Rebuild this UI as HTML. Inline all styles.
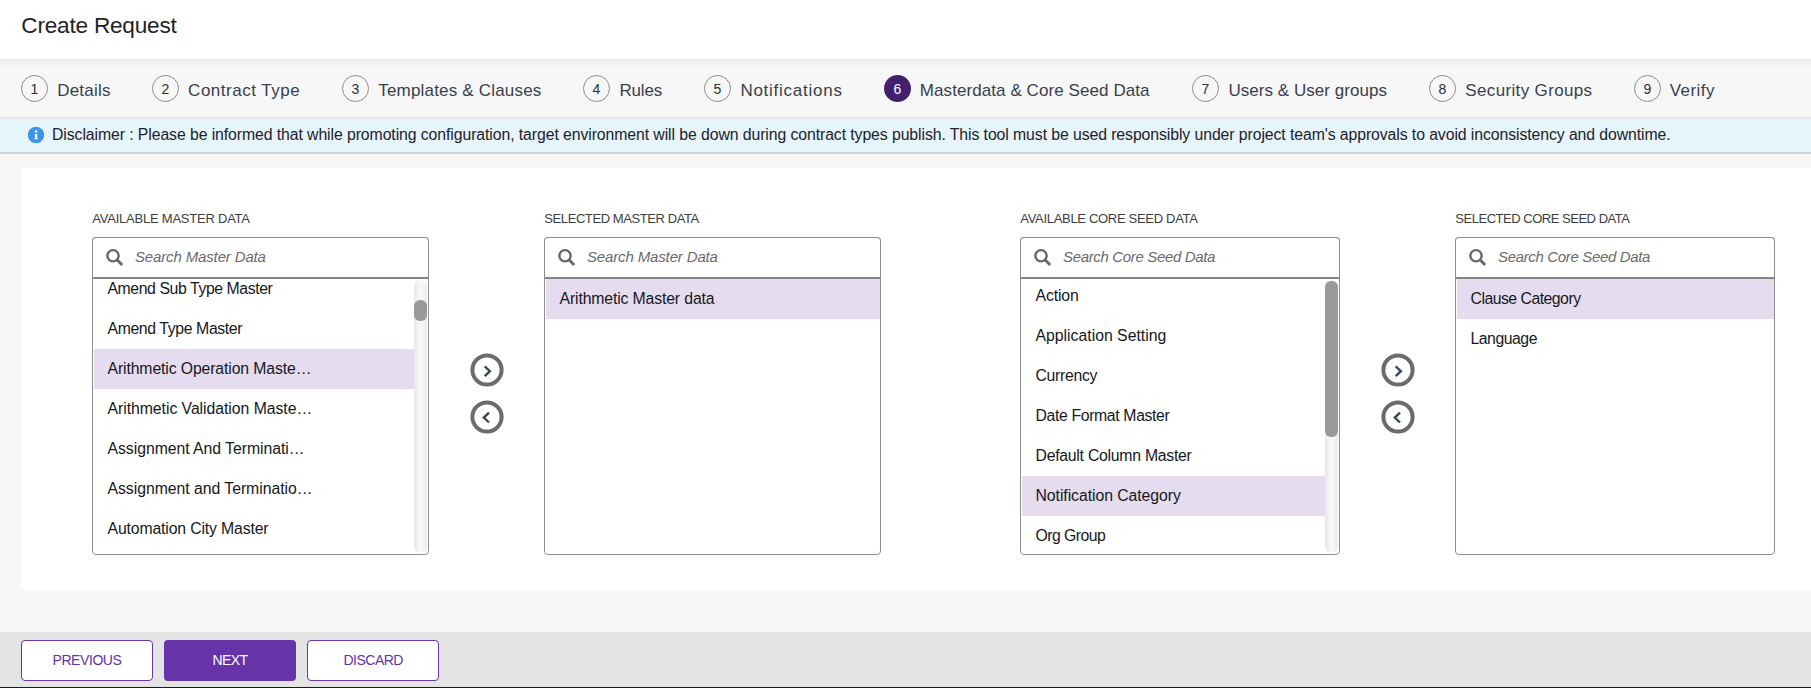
<!DOCTYPE html><html><head><meta charset="utf-8"><style>
*{margin:0;padding:0;box-sizing:border-box}
html,body{width:1811px;height:688px;overflow:hidden;background:#f7f7f7;font-family:"Liberation Sans",sans-serif}
.t{position:absolute;white-space:nowrap}
.a{position:absolute}
</style></head><body>
<div class="a" style="left:0;top:0;width:1811px;height:59px;background:#fff"></div>
<div class="a" style="left:0;top:59px;width:1811px;height:8px;background:linear-gradient(#e6e6e6,#efefef 30%,#f7f7f7)"></div>
<div class="t" style="left:21.30px;top:12.30px;font-size:22.6px;line-height:28px;color:#1f2328;letter-spacing:-0.216px;">Create Request</div>
<div class="a" style="left:21px;top:75px;width:27px;height:27px;border-radius:50%;border:1px solid #8a8a8a"></div>
<div class="t" style="left:30.62px;top:80.50px;font-size:14px;line-height:17px;color:#2b2f36;">1</div>
<div class="t" style="left:57.20px;top:79.80px;font-size:17px;line-height:21px;color:#383f4b;letter-spacing:0.211px;">Details</div>
<div class="a" style="left:152px;top:75px;width:27px;height:27px;border-radius:50%;border:1px solid #8a8a8a"></div>
<div class="t" style="left:161.62px;top:80.50px;font-size:14px;line-height:17px;color:#2b2f36;">2</div>
<div class="t" style="left:188.10px;top:79.80px;font-size:17px;line-height:21px;color:#383f4b;letter-spacing:0.510px;">Contract Type</div>
<div class="a" style="left:342px;top:75px;width:27px;height:27px;border-radius:50%;border:1px solid #8a8a8a"></div>
<div class="t" style="left:351.62px;top:80.50px;font-size:14px;line-height:17px;color:#2b2f36;">3</div>
<div class="t" style="left:378.30px;top:79.80px;font-size:17px;line-height:21px;color:#383f4b;letter-spacing:0.183px;">Templates &amp; Clauses</div>
<div class="a" style="left:583px;top:75px;width:27px;height:27px;border-radius:50%;border:1px solid #8a8a8a"></div>
<div class="t" style="left:592.62px;top:80.50px;font-size:14px;line-height:17px;color:#2b2f36;">4</div>
<div class="t" style="left:619.40px;top:79.80px;font-size:17px;line-height:21px;color:#383f4b;letter-spacing:-0.134px;">Rules</div>
<div class="a" style="left:704px;top:75px;width:27px;height:27px;border-radius:50%;border:1px solid #8a8a8a"></div>
<div class="t" style="left:713.62px;top:80.50px;font-size:14px;line-height:17px;color:#2b2f36;">5</div>
<div class="t" style="left:740.40px;top:79.80px;font-size:17px;line-height:21px;color:#383f4b;letter-spacing:0.745px;">Notifications</div>
<div class="a" style="left:884px;top:75px;width:27px;height:27px;border-radius:50%;background:#42206e"></div>
<div class="t" style="left:893.62px;top:80.50px;font-size:14px;line-height:17px;color:#fff;">6</div>
<div class="t" style="left:919.80px;top:79.80px;font-size:17px;line-height:21px;color:#383f4b;letter-spacing:0.077px;">Masterdata &amp; Core Seed Data</div>
<div class="a" style="left:1192px;top:75px;width:27px;height:27px;border-radius:50%;border:1px solid #8a8a8a"></div>
<div class="t" style="left:1201.62px;top:80.50px;font-size:14px;line-height:17px;color:#2b2f36;">7</div>
<div class="t" style="left:1228.40px;top:79.80px;font-size:17px;line-height:21px;color:#383f4b;letter-spacing:0.052px;">Users &amp; User groups</div>
<div class="a" style="left:1429px;top:75px;width:27px;height:27px;border-radius:50%;border:1px solid #8a8a8a"></div>
<div class="t" style="left:1438.62px;top:80.50px;font-size:14px;line-height:17px;color:#2b2f36;">8</div>
<div class="t" style="left:1465.30px;top:79.80px;font-size:17px;line-height:21px;color:#383f4b;letter-spacing:0.351px;">Security Groups</div>
<div class="a" style="left:1634px;top:75px;width:27px;height:27px;border-radius:50%;border:1px solid #8a8a8a"></div>
<div class="t" style="left:1643.62px;top:80.50px;font-size:14px;line-height:17px;color:#2b2f36;">9</div>
<div class="t" style="left:1669.70px;top:79.80px;font-size:17px;line-height:21px;color:#383f4b;letter-spacing:0.460px;">Verify</div>
<div class="a" style="left:0;top:117px;width:1811px;height:37px;background:#e6f4fc;border-top:2px solid #e6e6e6;border-bottom:2px solid #c8d2d9"></div>
<div class="a" style="left:28px;top:126.5px;width:16px;height:16px;border-radius:50%;background:#3a90e6"></div>
<svg class="a" style="left:28px;top:126.5px" width="16" height="16" viewBox="0 0 16 16"><circle cx="8" cy="8" r="8" fill="#3d94ec"/><circle cx="8.2" cy="4.6" r="1.25" fill="#fff"/><path d="M6.6,7 H9.2 V11.2 H10 V12.3 H6.4 V11.2 H7.2 V8.1 H6.6 Z" fill="#fff"/></svg>
<div class="t" style="left:52.00px;top:124.90px;font-size:15.8px;line-height:19px;color:#1e2226;letter-spacing:-0.082px;">Disclaimer : Please be informed that while promoting configuration, target environment will be down during contract types publish. This tool must be used responsibly under project team's approvals to avoid inconsistency and downtime.</div>
<div class="a" style="left:21px;top:168px;width:1790px;height:422px;background:#fff"></div>
<div class="a" style="left:0;top:632px;width:1811px;height:56px;background:#e4e4e4"></div>
<div class="a" style="left:0;top:687px;width:1811px;height:1px;background:#1c1530"></div>
<div class="t" style="left:92.30px;top:211.40px;font-size:13px;line-height:16px;color:#3d3d3d;letter-spacing:-0.228px;">AVAILABLE MASTER DATA</div>
<div class="a" style="left:92px;top:237px;width:337px;height:318px;border:1px solid #8f8f8f;border-radius:4px;overflow:hidden;background:#fff"><div class="a" style="left:1px;top:111px;width:321px;height:40px;background:#e5ddef"></div><div class="a" style="left:321px;top:42px;width:13px;height:273px;border-radius:6.3px;background:linear-gradient(90deg,#e6e9ec,#f7f8f9 50%,#e9ecee)"></div><div class="a" style="left:321px;top:62px;width:13px;height:21px;border-radius:6px;background:#999"></div></div>
<div class="t" style="left:107.50px;top:278.80px;font-size:15.8px;line-height:19px;color:#16181b;letter-spacing:-0.412px;">Amend Sub Type Master</div>
<div class="t" style="left:107.50px;top:318.80px;font-size:15.8px;line-height:19px;color:#16181b;letter-spacing:-0.381px;">Amend Type Master</div>
<div class="t" style="left:107.50px;top:358.80px;font-size:15.8px;line-height:19px;color:#16181b;letter-spacing:-0.124px;">Arithmetic Operation Maste…</div>
<div class="t" style="left:107.50px;top:398.80px;font-size:15.8px;line-height:19px;color:#16181b;letter-spacing:-0.049px;">Arithmetic Validation Maste…</div>
<div class="t" style="left:107.50px;top:438.80px;font-size:15.8px;line-height:19px;color:#16181b;letter-spacing:-0.046px;">Assignment And Terminati…</div>
<div class="t" style="left:107.50px;top:478.80px;font-size:15.8px;line-height:19px;color:#16181b;letter-spacing:-0.040px;">Assignment and Terminatio…</div>
<div class="t" style="left:107.50px;top:518.80px;font-size:15.8px;line-height:19px;color:#16181b;letter-spacing:-0.145px;">Automation City Master</div>
<div class="a" style="left:92px;top:237px;width:337px;height:42px;border:1px solid #8f8f8f;border-bottom:2px solid #858585;border-radius:4px 4px 0 0;background:#fff"></div>
<svg class="a" style="left:106px;top:248px" width="18" height="18" viewBox="0 0 18 18"><circle cx="7" cy="7.75" r="5.65" fill="none" stroke="#666" stroke-width="2.4"/><line x1="10.8" y1="11.6" x2="16.1" y2="16.9" stroke="#666" stroke-width="2.8"/></svg>
<div class="t" style="left:135.00px;top:248.30px;font-size:15px;line-height:18px;color:#6a6a6a;letter-spacing:-0.143px;font-style:italic;">Search Master Data</div>
<div class="t" style="left:544.30px;top:211.40px;font-size:13px;line-height:16px;color:#3d3d3d;letter-spacing:-0.412px;">SELECTED MASTER DATA</div>
<div class="a" style="left:544px;top:237px;width:337px;height:318px;border:1px solid #8f8f8f;border-radius:4px;overflow:hidden;background:#fff"><div class="a" style="left:1px;top:41px;width:335px;height:40px;background:#e5ddef"></div></div>
<div class="t" style="left:559.50px;top:288.80px;font-size:15.8px;line-height:19px;color:#16181b;letter-spacing:-0.141px;">Arithmetic Master data</div>
<div class="a" style="left:544px;top:237px;width:337px;height:42px;border:1px solid #8f8f8f;border-bottom:2px solid #858585;border-radius:4px 4px 0 0;background:#fff"></div>
<svg class="a" style="left:558px;top:248px" width="18" height="18" viewBox="0 0 18 18"><circle cx="7" cy="7.75" r="5.65" fill="none" stroke="#666" stroke-width="2.4"/><line x1="10.8" y1="11.6" x2="16.1" y2="16.9" stroke="#666" stroke-width="2.8"/></svg>
<div class="t" style="left:587.00px;top:248.30px;font-size:15px;line-height:18px;color:#6a6a6a;letter-spacing:-0.143px;font-style:italic;">Search Master Data</div>
<div class="t" style="left:1020.30px;top:211.40px;font-size:13px;line-height:16px;color:#3d3d3d;letter-spacing:-0.310px;">AVAILABLE CORE SEED DATA</div>
<div class="a" style="left:1020px;top:237px;width:320px;height:318px;border:1px solid #8f8f8f;border-radius:4px;overflow:hidden;background:#fff"><div class="a" style="left:1px;top:238px;width:304px;height:40px;background:#e5ddef"></div><div class="a" style="left:304px;top:42px;width:13px;height:273px;border-radius:6.3px;background:linear-gradient(90deg,#e6e9ec,#f7f8f9 50%,#e9ecee)"></div><div class="a" style="left:304px;top:43px;width:13px;height:156px;border-radius:6px;background:#999"></div></div>
<div class="t" style="left:1035.50px;top:285.80px;font-size:15.8px;line-height:19px;color:#16181b;letter-spacing:-0.145px;">Action</div>
<div class="t" style="left:1035.50px;top:325.80px;font-size:15.8px;line-height:19px;color:#16181b;letter-spacing:-0.006px;">Application Setting</div>
<div class="t" style="left:1035.50px;top:365.80px;font-size:15.8px;line-height:19px;color:#16181b;letter-spacing:-0.296px;">Currency</div>
<div class="t" style="left:1035.50px;top:405.80px;font-size:15.8px;line-height:19px;color:#16181b;letter-spacing:-0.362px;">Date Format Master</div>
<div class="t" style="left:1035.50px;top:445.80px;font-size:15.8px;line-height:19px;color:#16181b;letter-spacing:-0.258px;">Default Column Master</div>
<div class="t" style="left:1035.50px;top:485.80px;font-size:15.8px;line-height:19px;color:#16181b;letter-spacing:-0.066px;">Notification Category</div>
<div class="t" style="left:1035.50px;top:525.80px;font-size:15.8px;line-height:19px;color:#16181b;letter-spacing:-0.544px;">Org Group</div>
<div class="a" style="left:1020px;top:237px;width:320px;height:42px;border:1px solid #8f8f8f;border-bottom:2px solid #858585;border-radius:4px 4px 0 0;background:#fff"></div>
<svg class="a" style="left:1034px;top:248px" width="18" height="18" viewBox="0 0 18 18"><circle cx="7" cy="7.75" r="5.65" fill="none" stroke="#666" stroke-width="2.4"/><line x1="10.8" y1="11.6" x2="16.1" y2="16.9" stroke="#666" stroke-width="2.8"/></svg>
<div class="t" style="left:1063.00px;top:248.30px;font-size:15px;line-height:18px;color:#6a6a6a;letter-spacing:-0.345px;font-style:italic;">Search Core Seed Data</div>
<div class="t" style="left:1455.30px;top:211.40px;font-size:13px;line-height:16px;color:#3d3d3d;letter-spacing:-0.477px;">SELECTED CORE SEED DATA</div>
<div class="a" style="left:1455px;top:237px;width:320px;height:318px;border:1px solid #8f8f8f;border-radius:4px;overflow:hidden;background:#fff"><div class="a" style="left:1px;top:41px;width:318px;height:40px;background:#e5ddef"></div></div>
<div class="t" style="left:1470.50px;top:288.80px;font-size:15.8px;line-height:19px;color:#16181b;letter-spacing:-0.508px;">Clause Category</div>
<div class="t" style="left:1470.50px;top:328.80px;font-size:15.8px;line-height:19px;color:#16181b;letter-spacing:-0.473px;">Language</div>
<div class="a" style="left:1455px;top:237px;width:320px;height:42px;border:1px solid #8f8f8f;border-bottom:2px solid #858585;border-radius:4px 4px 0 0;background:#fff"></div>
<svg class="a" style="left:1469px;top:248px" width="18" height="18" viewBox="0 0 18 18"><circle cx="7" cy="7.75" r="5.65" fill="none" stroke="#666" stroke-width="2.4"/><line x1="10.8" y1="11.6" x2="16.1" y2="16.9" stroke="#666" stroke-width="2.8"/></svg>
<div class="t" style="left:1498.00px;top:248.30px;font-size:15px;line-height:18px;color:#6a6a6a;letter-spacing:-0.345px;font-style:italic;">Search Core Seed Data</div>
<svg class="a" style="left:469.6px;top:352.5px" width="34" height="34" viewBox="-17 -17 34 34"><circle r="14.6" fill="#fff" stroke="#6b6b6b" stroke-width="4"/><path d="M-2.3,-3.7 L2.9,1.2 L-2.3,6.1" fill="none" stroke="#3d4654" stroke-width="2.4"/></svg>
<svg class="a" style="left:469.6px;top:399.5px" width="34" height="34" viewBox="-17 -17 34 34"><circle r="14.6" fill="#fff" stroke="#6b6b6b" stroke-width="4"/><path d="M2.0,-4.3 L-3.2,0.6 L2.0,5.5" fill="none" stroke="#3d4654" stroke-width="2.4"/></svg>
<svg class="a" style="left:1380.5px;top:352.5px" width="34" height="34" viewBox="-17 -17 34 34"><circle r="14.6" fill="#fff" stroke="#6b6b6b" stroke-width="4"/><path d="M-2.3,-3.7 L2.9,1.2 L-2.3,6.1" fill="none" stroke="#3d4654" stroke-width="2.4"/></svg>
<svg class="a" style="left:1380.5px;top:399.5px" width="34" height="34" viewBox="-17 -17 34 34"><circle r="14.6" fill="#fff" stroke="#6b6b6b" stroke-width="4"/><path d="M2.0,-4.3 L-3.2,0.6 L2.0,5.5" fill="none" stroke="#3d4654" stroke-width="2.4"/></svg>
<div class="a" style="left:21px;top:640px;width:132px;height:41px;border:1.5px solid #6a37a8;border-radius:4px;background:#fff"></div>
<div class="a" style="left:164px;top:640px;width:132px;height:41px;border-radius:4px;background:#6633a9"></div>
<div class="a" style="left:307px;top:640px;width:132px;height:41px;border:1.5px solid #6a37a8;border-radius:4px;background:#fff"></div>
<div class="t" style="left:52.50px;top:652.30px;font-size:14px;line-height:17px;color:#6233a6;letter-spacing:-0.426px;">PREVIOUS</div>
<div class="t" style="left:212.60px;top:652.30px;font-size:14px;line-height:17px;color:#ffffff;letter-spacing:-0.637px;">NEXT</div>
<div class="t" style="left:343.50px;top:652.30px;font-size:14px;line-height:17px;color:#6233a6;letter-spacing:-0.517px;">DISCARD</div>
</body></html>
